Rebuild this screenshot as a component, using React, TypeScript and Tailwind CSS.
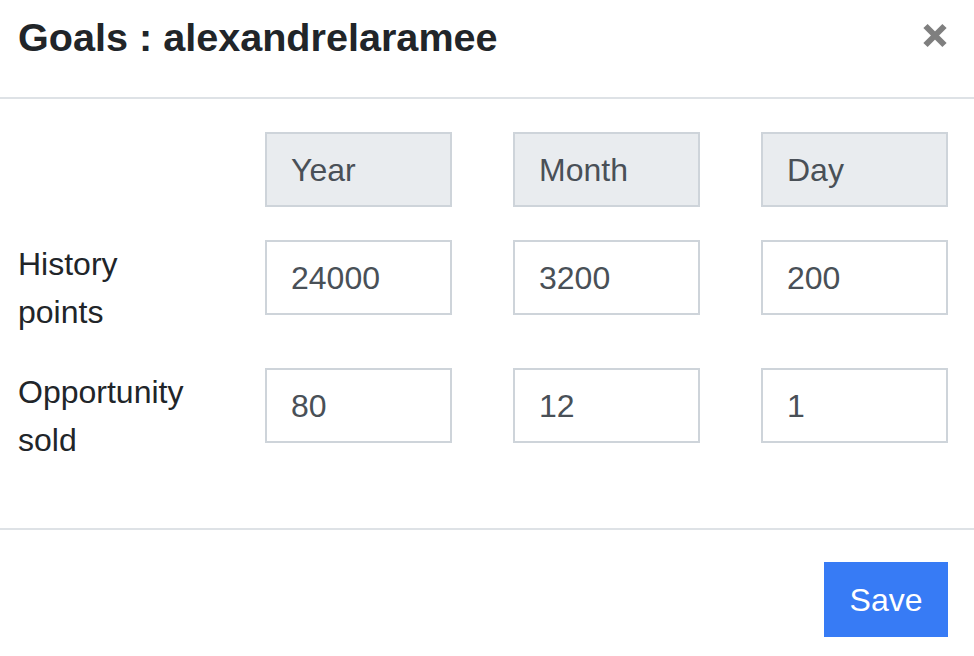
const rows = [
  { label: ["History", "points"], values: ["24000", "3200", "200"] },
  { label: ["Opportunity", "sold"], values: ["80", "12", "1"] },
];

const periods = ["Year", "Month", "Day"];

export default function App() {
  return (
    <div className="w-[974px] h-[656px] bg-white text-[#212529] font-['Liberation_Sans',Arial,sans-serif] flex flex-col">
      {/* header */}
      <div className="h-[99px] pl-[18px] pr-[26px] pt-[7px] flex justify-between items-start border-b-2 border-[#dee2e6]">
        <h1 className="text-[39.6px] leading-[60px] font-bold">Goals : alexandrelaramee</h1>
        <button className="mt-[15px] w-[26px] h-[26px] flex items-center justify-center text-[#7f7f7f]">
          <svg width="26" height="25" viewBox="0 0 26 25">
            <path d="M3.5 3 L22.5 22 M22.5 3 L3.5 22" stroke="currentColor" strokeWidth="6" />
          </svg>
        </button>
      </div>

      {/* body */}
      <div className="flex-1 pl-[18px] pr-[26px] pt-[33px] flex flex-col gap-[32px]">
        <div className="grid grid-cols-[186px_187px_187px_187px] gap-x-[61px] mb-[1px]">
          <div />
          {periods.map((p) => (
            <div
              key={p}
              className="h-[75px] border-2 border-[#ced4da] bg-[#e9ecef] text-[#495057] text-[32px] pl-[24px] pt-[1px] flex items-center"
            >
              {p}
            </div>
          ))}
        </div>
        {rows.map((r) => (
          <div key={r.label[0]} className="grid grid-cols-[186px_187px_187px_187px] gap-x-[61px] items-start">
            <div className="text-[32px] leading-[48px]">
              {r.label[0]}
              <br />
              {r.label[1]}
            </div>
            {r.values.map((v, i) => (
              <div
                key={i}
                className="h-[75px] border-2 border-[#ced4da] bg-white text-[#495057] text-[32px] pl-[24px] pt-[1px] flex items-center"
              >
                {v}
              </div>
            ))}
          </div>
        ))}
      </div>

      {/* footer */}
      <div className="h-[128px] border-t-2 border-[#dee2e6] pt-[32px] pr-[26px] flex justify-end items-start">
        <button className="h-[75px] w-[124px] bg-[#377bf5] text-white text-[32px] flex items-center justify-center">
          Save
        </button>
      </div>
    </div>
  );
}
